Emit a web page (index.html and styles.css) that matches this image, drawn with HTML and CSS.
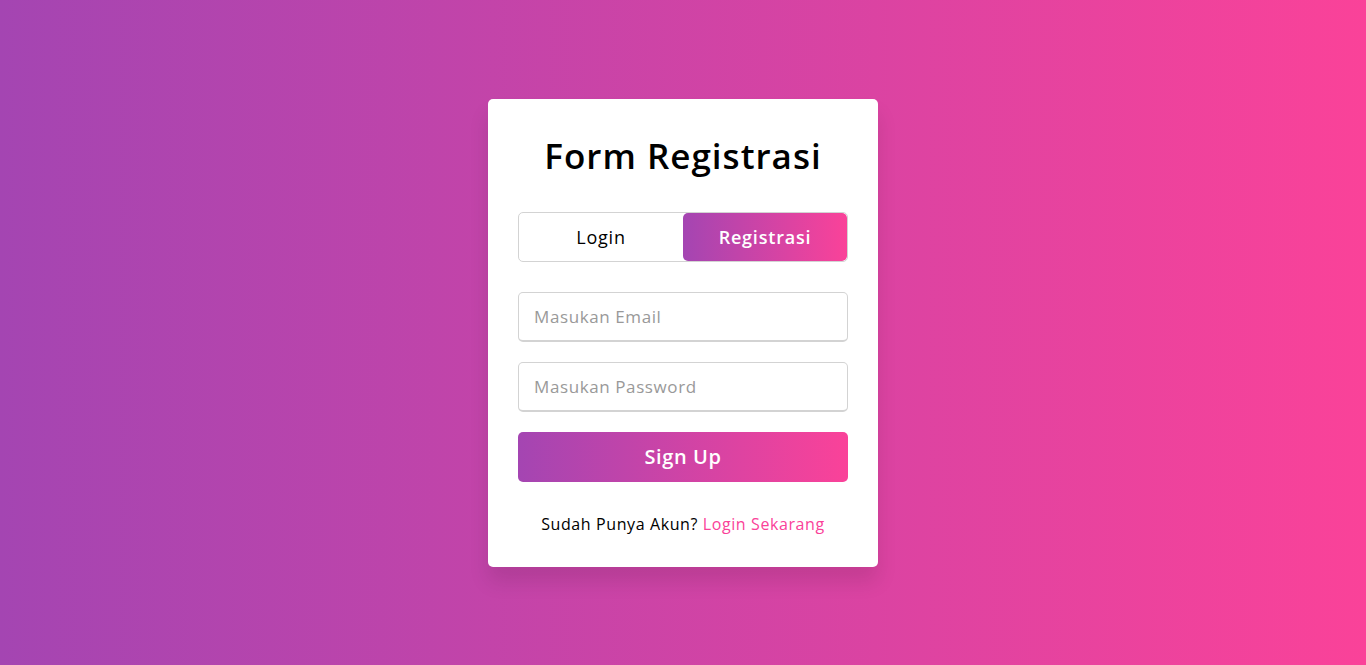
FILE: index.html
```html
<!DOCTYPE html>
<html lang="id">
<head>
<meta charset="utf-8">
<title>Form Registrasi</title>
<link rel="stylesheet" href="styles.css">
</head>
<body>
  <div class="wrapper">
    <div class="title">Form Registrasi</div>
    <div class="slide-controls">
      <div class="tab">Login</div>
      <div class="tab active">Registrasi</div>
    </div>
    <form class="form">
      <div class="field"><input type="text" placeholder="Masukan Email"></div>
      <div class="field"><input type="password" placeholder="Masukan Password"></div>
      <div class="field"><button type="button" class="btn">Sign Up</button></div>
      <div class="signup-link">Sudah Punya Akun? <a href="#">Login Sekarang</a></div>
    </form>
  </div>
</body>
</html>
```
FILE: styles.css
```css
* { margin: 0; padding: 0; box-sizing: border-box; }
html, body { height: 100%; }
body {
  font-family: "Open Sans", "Noto Sans", sans-serif;
  display: flex;
  align-items: center;
  justify-content: center;
  background: linear-gradient(to right, #a445b2, #fa4299);
}
.wrapper {
  width: 390px;
  background: #fff;
  padding: 30px;
  border-radius: 5px;
  box-shadow: 0 15px 20px rgba(0,0,0,0.1);
}
.title {
  font-size: 35px;
  font-weight: 600;
  text-align: center;
  line-height: 53px;
  letter-spacing: 1px;
  color: #000;
}
.slide-controls {
  display: flex;
  height: 50px;
  margin: 30px 0 10px;
  border: 1px solid lightgrey;
  border-radius: 5px;
  overflow: hidden;
}
.form { display: flow-root; }
.tab {
  flex: 1;
  display: flex;
  align-items: center;
  justify-content: center;
  font-size: 18px;
  font-weight: 600;
  letter-spacing: 0.8px;
  color: #000;
}
.tab:first-child { font-weight: 500; }
.tab.active {
  color: #fff;
  border-radius: 5px;
  background: linear-gradient(to right, #a445b2, #fa4299);
}
.field { height: 50px; margin-top: 20px; }
.field input {
  width: 100%;
  height: 100%;
  padding-left: 15px;
  border: 1px solid lightgrey;
  border-bottom-width: 2px;
  border-radius: 5px;
  font-family: inherit;
  font-size: 17px;
  letter-spacing: 0.6px;
  outline: none;
}
.field input::placeholder { color: #999; }
.btn {
  width: 100%;
  height: 100%;
  border: none;
  border-radius: 5px;
  color: #fff;
  font-family: inherit;
  font-size: 20px;
  font-weight: 600;
  letter-spacing: 0.6px;
  background: linear-gradient(to right, #a445b2, #fa4299);
}
.signup-link {
  margin-top: 30px;
  text-align: center;
  font-size: 16px;
  line-height: 25px;
  letter-spacing: 0.6px;
  color: #000;
}
.signup-link a { color: #fa4299; text-decoration: none; }
```
